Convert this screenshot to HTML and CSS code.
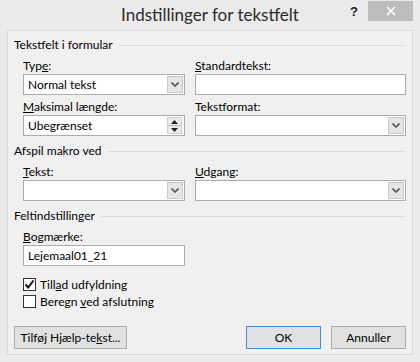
FILE: index.html
```html
<!DOCTYPE html>
<html lang="da">
<head>
  <meta charset="UTF-8" />
  <title>Indstillinger for tekstfelt</title>
  <link rel="stylesheet" href="styles.css">
</head>
<body>

  <div class="titlebar">
    <div></div>
    <div class="title">Indstillinger for tekstfelt</div>
    <div class="controls">
      <span class="help">?</span>
      <span class="close">
        <svg width="10" height="10" viewBox="0 0 10 10"><path d="M1 1L9 9M9 1L1 9" stroke="#fff" stroke-width="1.6"/></svg>
      </span>
    </div>
  </div>

  <div class="panel">

    <!-- Tekstfelt i formular -->
    <div class="group-head"><span>Tekstfelt i formular</span><i></i></div>
    <div class="fields">
      <div class="field">
        <label>Typ<u>e</u>:</label>
        <div class="box combo"><span>Normal tekst</span><b class="drop"><svg width="8" height="5" viewBox="0 0 8 5"><path d="M0.5 0.5L4 4L7.5 0.5" fill="none" stroke="#555" stroke-width="1.6"/></svg></b></div>
      </div>
      <div class="field">
        <label><u>S</u>tandardtekst:</label>
        <div class="box"></div>
      </div>
      <div class="field">
        <label><u>M</u>aksimal længde:</label>
        <div class="box combo"><span>Ubegrænset</span>
          <b class="spin">
            <em><svg width="7" height="4" viewBox="0 0 7 4"><path d="M0 4L3.5 0L7 4Z" fill="#222"/></svg></em>
            <em><svg width="7" height="4" viewBox="0 0 7 4"><path d="M0 0L3.5 4L7 0Z" fill="#222"/></svg></em>
          </b>
        </div>
      </div>
      <div class="field">
        <label>Tekst<u>f</u>ormat:</label>
        <div class="box combo"><b class="drop"><svg width="8" height="5" viewBox="0 0 8 5"><path d="M0.5 0.5L4 4L7.5 0.5" fill="none" stroke="#555" stroke-width="1.6"/></svg></b></div>
      </div>
    </div>

    <!-- Afspil makro ved -->
    <div class="group-head"><span>Afspil makro ved</span><i></i></div>
    <div class="fields">
      <div class="field">
        <label><u>T</u>ekst:</label>
        <div class="box combo"><b class="drop"><svg width="8" height="5" viewBox="0 0 8 5"><path d="M0.5 0.5L4 4L7.5 0.5" fill="none" stroke="#555" stroke-width="1.6"/></svg></b></div>
      </div>
      <div class="field">
        <label><u>U</u>dgang:</label>
        <div class="box combo"><b class="drop"><svg width="8" height="5" viewBox="0 0 8 5"><path d="M0.5 0.5L4 4L7.5 0.5" fill="none" stroke="#555" stroke-width="1.6"/></svg></b></div>
      </div>
    </div>

    <!-- Feltindstillinger -->
    <div class="group-head"><span>Feltindstillinger</span><i></i></div>
    <div class="fields">
      <div class="field">
        <label><u>B</u>ogmærke:</label>
        <div class="box"><span>Lejemaal01_21</span></div>
      </div>
    </div>
    <div class="checks">
      <div class="check"><span class="cb"><svg width="11" height="11" viewBox="0 0 11 11"><path d="M1.5 5.5L4.2 8.5L9.5 1.5" fill="none" stroke="#111" stroke-width="2"/></svg></span><span>Till<u>a</u>d udfyldning</span></div>
      <div class="check"><span class="cb"></span><span>Beregn <u>v</u>ed afslutning</span></div>
    </div>

    <div class="buttons">
      <button class="btn wide">Tilføj Hjælp-te<u>k</u>st...</button>
      <button class="btn default">OK</button>
      <button class="btn">Annuller</button>
    </div>

  </div>

</body>
</html>
```

FILE: styles.css
```css
body {
  margin: 0;
  width: 420px;
  height: 362px;
  background: #ebebeb;
  font-family: Lato, "Noto Sans", sans-serif;
  font-size: 12px;
  color: #000;
  overflow: hidden;
}

.titlebar {
  display: grid;
  grid-template-columns: 1fr auto 1fr;
  height: 30px;
}

.title {
  font-size: 17px;
  color: #2b2b2b;
  line-height: 30px;
}

.controls {
  display: flex;
  justify-content: flex-end;
  align-items: flex-start;
  padding-right: 7px;
}

.help {
  font-family: "Liberation Sans", sans-serif;
  font-weight: bold;
  font-size: 13px;
  color: #222;
  margin: 4px 10px 0 0;
}

.close {
  display: flex;
  align-items: center;
  justify-content: center;
  width: 45px;
  height: 20px;
  margin-top: 1px;
  background: #bdbdbd;
}

.panel {
  margin: 0 7px;
  height: 325px;
  border: 1px solid #dadada;
  background: #f0f0f0;
  padding: 6px 6px 0 6px;
  box-sizing: border-box;
}

.group-head {
  display: flex;
  align-items: center;
  height: 16px;
  line-height: 16px;
}

.group-head i {
  flex: 1;
  height: 1px;
  background: #dcdcdc;
  margin-left: 6px;
}

.fields {
  display: grid;
  grid-template-columns: 162px 211px;
  column-gap: 10px;
  row-gap: 4px;
  padding-left: 9px;
  margin-top: 5px;
  margin-bottom: 7px;
}

.field label {
  display: block;
  height: 16px;
  line-height: 16px;
}

.box {
  display: flex;
  align-items: center;
  height: 21px;
  box-sizing: border-box;
  border: 1px solid #acacac;
  background: #fff;
  padding-left: 4px;
}

.combo {
  padding-right: 1px;
}

.drop,
.spin {
  margin-left: auto;
}

.drop {
  display: flex;
  align-items: center;
  justify-content: center;
  width: 16px;
  height: 17px;
  background: #e5e5e5;
  border: 1px solid #c9c9c9;
  box-sizing: border-box;
}

.spin {
  display: flex;
  flex-direction: column;
  width: 15px;
  height: 17px;
  margin-right: 1px;
  border: 1px solid #cfcfcf;
  box-sizing: border-box;
  background: #eaeaea;
}

.spin em {
  flex: 1;
  display: flex;
  align-items: center;
  justify-content: center;
}

.spin em + em {
  border-top: 1px solid #bbb;
}

.checks {
  margin-top: 10px;
  padding-left: 9px;
}

.check {
  display: flex;
  align-items: center;
  height: 17px;
}

.cb {
  display: flex;
  align-items: center;
  justify-content: center;
  width: 13px;
  height: 13px;
  box-sizing: border-box;
  border: 1px solid #333;
  background: #fff;
  margin-right: 4px;
}

.buttons {
  display: flex;
  gap: 10px;
  margin-top: 16px;
}

.btn {
  font-family: inherit;
  font-size: 12px;
  font-weight: normal;
  color: #000;
  height: 23px;
  width: 75px;
  padding: 0;
  border: 1px solid #adadad;
  background: #e1e1e1;
}

.btn.wide {
  width: 113px;
  margin-right: auto;
}

.btn.default {
  border-color: #3c8fdc;
}
```
